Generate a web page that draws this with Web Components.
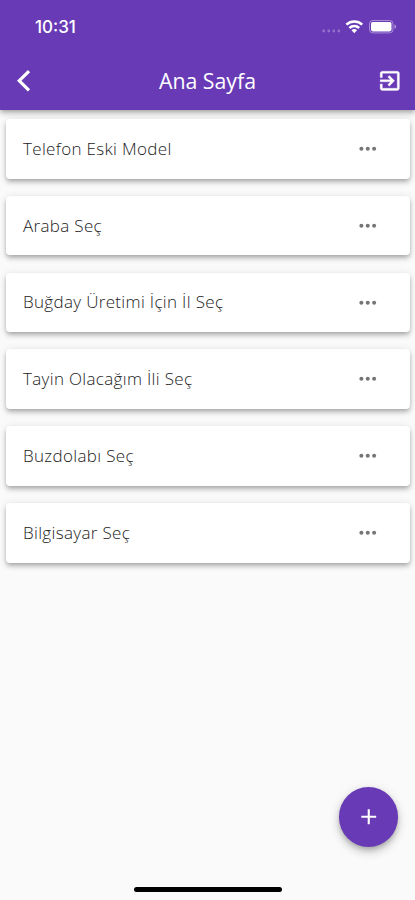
<!DOCTYPE html>
<html lang="tr">
<head>
<meta charset="utf-8">
<meta name="viewport" content="width=device-width, initial-scale=1">
<title>Ana Sayfa</title>
<style>
  html, body {
    margin: 0;
    height: 100%;
  }

  body {
    --primary: #693ab6;
    font-family: "Open Sans", "Noto Sans", sans-serif;
    background: #fafafa;
    overflow: hidden;
  }
</style>
</head>
<body>
<app-screen>
  <status-bar slot="header" time="10:31"></status-bar>
  <app-bar slot="header">Ana Sayfa</app-bar>
  <list-card>Telefon Eski Model</list-card>
  <list-card>Araba Seç</list-card>
  <list-card>Buğday Üretimi İçin İl Seç</list-card>
  <list-card>Tayin Olacağım İli Seç</list-card>
  <list-card>Buzdolabı Seç</list-card>
  <list-card>Bilgisayar Seç</list-card>
  <fab-button slot="fab"></fab-button>
</app-screen>

<script>
class AppScreen extends HTMLElement {
  constructor() {
    super();
    this.attachShadow({mode: 'open'});
    this.render();
  }

  render() {
    this.shadowRoot.innerHTML = `
      <style>
        :host {
          display: flex;
          flex-direction: column;
          height: 100vh;
          background: #fafafa;
        }

        header {
          z-index: 1;
          flex: none;
          height: 109.5px;
          background: var(--primary);
          box-shadow: 0 2px 4px -1px rgba(0, 0, 0, .2), 0 4px 5px rgba(0, 0, 0, .14), 0 1px 8px rgba(0, 0, 0, .1);
        }

        main {
          flex: 1;
          display: flex;
          flex-direction: column;
          gap: 17.3px;
          padding: 9.6px 5px 0 6px;
        }

        footer {
          display: flex;
          flex-direction: column;
          align-items: flex-end;
        }

        .fab {
          margin: 0 17px 40.5px 0;
        }

        .indicator {
          align-self: center;
          width: 148px;
          height: 5px;
          margin: 0 0 8px 1px;
          border-radius: 3px;
          background: #000;
        }
      </style>
      <header><slot name="header"></slot></header>
      <main><slot></slot></main>
      <footer>
        <div class="fab"><slot name="fab"></slot></div>
        <div class="indicator"></div>
      </footer>
    `;
  }
}

class StatusBar extends HTMLElement {
  constructor() {
    super();
    this.attachShadow({mode: 'open'});
  }

  connectedCallback() {
    this.render();
  }

  get time() {
    return this.getAttribute('time') || '';
  }

  render() {
    this.shadowRoot.innerHTML = `
      <style>
        :host {
          display: flex;
          align-items: center;
          justify-content: space-between;
          box-sizing: border-box;
          height: 52px;
          padding: 2px 17px 0 35px;
          color: #fff;
          font: 500 17px/20px Inter, Roboto, sans-serif;
        }

        svg {
          display: block;
        }
      </style>
      <span>${this.time}</span>
      <svg width="76" height="20" viewBox="0 0 76 20" fill="#fff">
        <g opacity=".28">
          <circle cx="1.7" cy="14" r="1.4"/>
          <circle cx="6.8" cy="14" r="1.4"/>
          <circle cx="11.8" cy="14" r="1.4"/>
          <circle cx="16.8" cy="14" r="1.4"/>
        </g>
        <g fill="none" stroke="#fff" stroke-width="2.5">
          <path d="M24.4 7.7a11.6 11.6 0 0 1 15.8 0"/>
          <path d="M27.4 11a7.2 7.2 0 0 1 9.8 0"/>
        </g>
        <path d="M29.5 13.3a4.3 4.3 0 0 1 5.6 0L32.3 16.2z"/>
        <rect x="47.5" y="3.5" width="23.5" height="12.4" rx="3.4" fill="none" stroke="#fff" opacity=".42"/>
        <rect x="49" y="5" width="20.5" height="9.4" rx="1.8"/>
        <path d="M72.5 7.6v4.2c1-.4 1.6-1.1 1.6-2.1s-.6-1.7-1.6-2.1z" opacity=".5"/>
      </svg>
    `;
  }
}

class AppBar extends HTMLElement {
  constructor() {
    super();
    this.attachShadow({mode: 'open'});
    this.render();
  }

  render() {
    this.shadowRoot.innerHTML = `
      <style>
        :host {
          display: grid;
          grid-template-columns: 60px 1fr 60px;
          align-items: center;
          height: 57.5px;
          color: #fff;
        }

        h1 {
          margin: 0;
          font-size: 21.3px;
          font-weight: 400;
          line-height: 30px;
          text-align: center;
        }

        svg {
          display: block;
          width: 25.6px;
          height: 25.6px;
          fill: currentColor;
        }

        .back {
          margin-left: 17px;
        }

        .exit {
          margin-left: 22px;
          stroke: currentColor;
          stroke-width: .3;
        }
      </style>
      <svg class="back" viewBox="0 0 24 24"><path d="M12.3 4L10.2 1.9 0 12l10.2 10.1 2.1-2.1L4.2 12z"/></svg>
      <h1><slot></slot></h1>
      <svg class="exit" viewBox="0 0 24 24"><path d="M10.09 15.59L11.5 17l5-5-5-5-1.41 1.41L12.67 11H3v2h9.67l-2.58 2.59zM19 3H5c-1.11 0-2 .9-2 2v4h2V5h14v14H5v-4H3v4c0 1.1.89 2 2 2h14c1.1 0 2-.9 2-2V5c0-1.1-.9-2-2-2z"/></svg>
    `;
  }
}

class ListCard extends HTMLElement {
  constructor() {
    super();
    this.attachShadow({mode: 'open'});
    this.render();
  }

  render() {
    this.shadowRoot.innerHTML = `
      <style>
        :host {
          display: flex;
          align-items: center;
          justify-content: space-between;
          box-sizing: border-box;
          height: 59.5px;
          padding: 0 30px 0 17px;
          border-radius: 4px;
          background: #fff;
          color: #222;
          font-size: 17px;
          font-weight: 300;
          line-height: 24px;
          letter-spacing: .33px;
          box-shadow: 0 2px 4px -1px rgba(0, 0, 0, .2), 0 4px 5px rgba(0, 0, 0, .14), 0 1px 8px rgba(0, 0, 0, .1);
        }

        svg {
          display: block;
          fill: #757575;
        }
      </style>
      <span><slot></slot></span>
      <svg width="25.5" height="25.5" viewBox="0 0 24 24">
        <circle cx="6" cy="12" r="1.9"/>
        <circle cx="12" cy="12" r="1.9"/>
        <circle cx="18" cy="12" r="1.9"/>
      </svg>
    `;
  }
}

class FabButton extends HTMLElement {
  constructor() {
    super();
    this.attachShadow({mode: 'open'});
    this.render();
  }

  render() {
    this.shadowRoot.innerHTML = `
      <style>
        :host {
          display: grid;
          place-items: center;
          width: 59.5px;
          height: 59.5px;
          border-radius: 50%;
          background: var(--primary);
          box-shadow: 0 3px 5px -1px rgba(0, 0, 0, .2), 0 6px 10px rgba(0, 0, 0, .14), 0 1px 12px rgba(0, 0, 0, .1);
        }
      </style>
      <svg width="25.5" height="25.5" viewBox="0 0 24 24" fill="#fff"><path d="M19 13h-6v6h-2v-6H5v-2h6V5h2v6h6v2z"/></svg>
    `;
  }
}

customElements.define('app-screen', AppScreen);
customElements.define('status-bar', StatusBar);
customElements.define('app-bar', AppBar);
customElements.define('list-card', ListCard);
customElements.define('fab-button', FabButton);
</script>
</body>
</html>
